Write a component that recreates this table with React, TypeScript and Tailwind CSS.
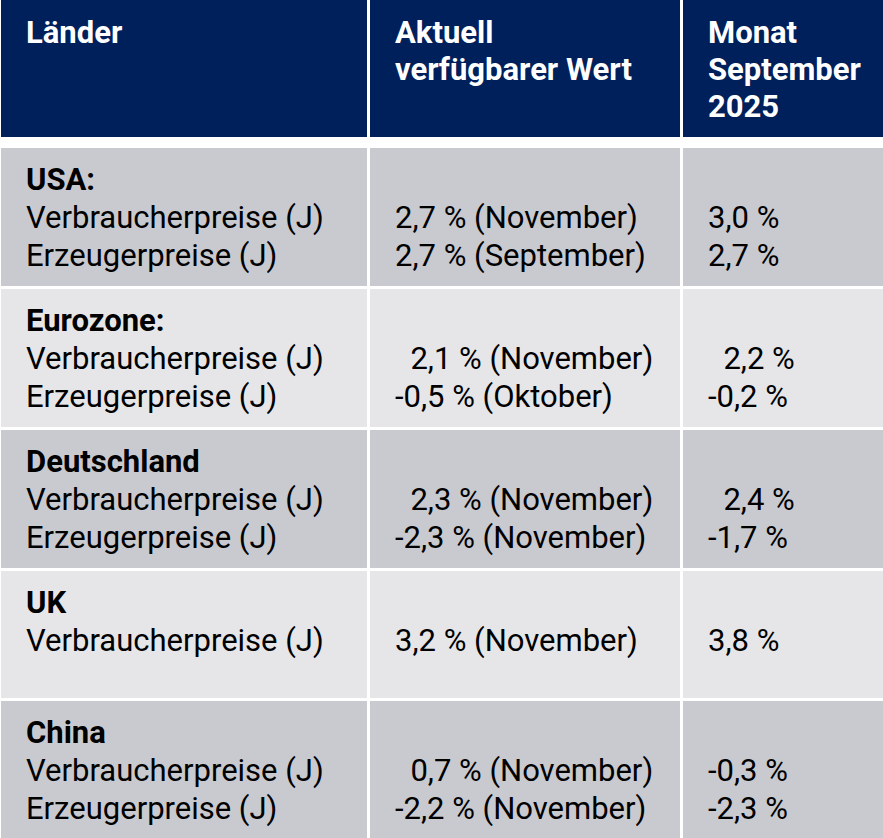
import React from 'react';

type Row = {
  land: string;
  labels: string[];
  aktuell: string[];
  monat: string[];
  dark: boolean;
  height: string;
};

const rows: Row[] = [
  {
    land: 'USA:',
    labels: ['Verbraucherpreise (J)', 'Erzeugerpreise (J)'],
    aktuell: ['2,7 % (November)', '2,7 % (September)'],
    monat: ['3,0 %', '2,7 %'],
    dark: true,
    height: 'h-[138px]',
  },
  {
    land: 'Eurozone:',
    labels: ['Verbraucherpreise (J)', 'Erzeugerpreise (J)'],
    aktuell: ['  2,1 % (November)', '-0,5 % (Oktober)'],
    monat: ['  2,2 %', '-0,2 %'],
    dark: false,
    height: 'h-[138px]',
  },
  {
    land: 'Deutschland',
    labels: ['Verbraucherpreise (J)', 'Erzeugerpreise (J)'],
    aktuell: ['  2,3 % (November)', '-2,3 % (November)'],
    monat: ['  2,4 %', '-1,7 %'],
    dark: true,
    height: 'h-[138px]',
  },
  {
    land: 'UK',
    labels: ['Verbraucherpreise (J)'],
    aktuell: ['3,2 % (November)'],
    monat: ['3,8 %'],
    dark: false,
    height: 'h-[127px]',
  },
  {
    land: 'China',
    labels: ['Verbraucherpreise (J)', 'Erzeugerpreise (J)'],
    aktuell: ['  0,7 % (November)', '-2,2 % (November)'],
    monat: ['-0,3 %', '-2,3 %'],
    dark: true,
    height: 'h-[138px]',
  },
];

const Cell: React.FC<{ dark: boolean; height: string; children: React.ReactNode }> = ({
  dark,
  height,
  children,
}) => (
  <div
    className={`${height} ${dark ? 'bg-[#c9cacf]' : 'bg-[#e6e6e9]'} pl-[25px] pt-[13px] whitespace-pre`}
  >
    {children}
  </div>
);

export default function App() {
  return (
    <div
      className="w-[883px] h-[838px] overflow-hidden bg-white pl-[1px] text-[31px] leading-[38px] text-black"
      style={{ fontFamily: 'Roboto, "Liberation Sans", sans-serif' }}
    >
      {/* Header */}
      <div className="grid grid-cols-[366px_310px_1fr] gap-x-[3px] h-[137px] font-bold text-white leading-[37px]">
        <div className="bg-[#00205b] pl-[25px] pt-[14px]">Länder</div>
        <div className="bg-[#00205b] pl-[25px] pt-[14px]">
          Aktuell
          <br />
          verfügbarer Wert
        </div>
        <div className="bg-[#00205b] pl-[25px] pt-[14px]">
          Monat
          <br />
          September
          <br />
          2025
        </div>
      </div>

      {/* Body */}
      <div className="mt-[11px] flex flex-col gap-y-[3px]">
        {rows.map((r) => (
          <div key={r.land} className="grid grid-cols-[366px_310px_1fr] gap-x-[3px]">
            <Cell dark={r.dark} height={r.height}>
              <div className="font-bold">{r.land}</div>
              {r.labels.map((l) => (
                <div key={l}>{l}</div>
              ))}
            </Cell>
            <Cell dark={r.dark} height={r.height}>
              <div>&nbsp;</div>
              {r.aktuell.map((v) => (
                <div key={v}>{v}</div>
              ))}
            </Cell>
            <Cell dark={r.dark} height={r.height}>
              <div>&nbsp;</div>
              {r.monat.map((v) => (
                <div key={v}>{v}</div>
              ))}
            </Cell>
          </div>
        ))}
      </div>
    </div>
  );
}
